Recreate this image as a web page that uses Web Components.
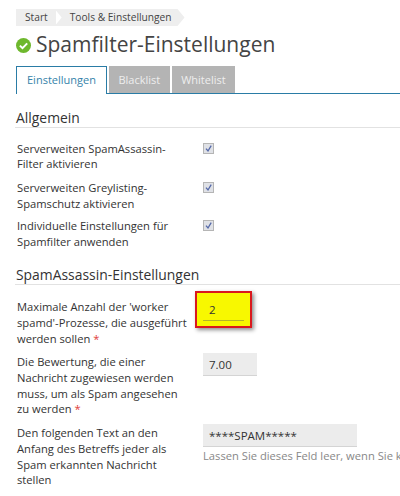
<!DOCTYPE html>
<html lang="de">
<head>
<meta charset="utf-8">
<title>Spamfilter-Einstellungen</title>
<style>
  html, body { margin: 0; height: 496px; overflow: hidden; background: #fff; }
  body { font-family: "Open Sans", "Liberation Sans", sans-serif; color: #333; }
</style>
</head>
<body>
<settings-page>
  <bread-crumbs>
    <span>Start</span>
    <span>Tools &amp; Einstellungen</span>
  </bread-crumbs>
  <page-title>Spamfilter-Einstellungen</page-title>
  <tab-bar>
    <span class="active">Einstellungen</span>
    <span>Blacklist</span>
    <span>Whitelist</span>
  </tab-bar>

  <section-title style="--top:14px">Allgemein</section-title>
  <form-row style="--top:11.5px">Serverweiten SpamAssassin-<br>Filter aktivieren<check-box slot="field"></check-box></form-row>
  <form-row style="--top:7px">Serverweiten Greylisting-<br>Spamschutz aktivieren<check-box slot="field"></check-box></form-row>
  <form-row style="--top:6px">Individuelle Einstellungen für<br>Spamfilter anwenden<check-box slot="field"></check-box></form-row>

  <section-title style="--top:15px">SpamAssassin-Einstellungen</section-title>
  <form-row style="--top:13.5px" required>Maximale Anzahl der 'worker<br>spamd'-Prozesse, die ausgeführt<br>werden sollen<text-field slot="field" value="2" size="41" highlight></text-field></form-row>
  <form-row style="--top:7px" required>Die Bewertung, die einer<br>Nachricht zugewiesen werden<br>muss, um als Spam angesehen<br>zu werden<text-field slot="field" value="7.00" size="54"></text-field></form-row>
  <form-row style="--top:7px">Den folgenden Text an den<br>Anfang des Betreffs jeder als<br>Spam erkannten Nachricht<br>stellen<text-field slot="field" value="****SPAM*****" size="154" hint="Lassen Sie dieses Feld leer, wenn Sie keinen Text hinzufügen möchten."></text-field></form-row>
</settings-page>

<script>
class SettingsPage extends HTMLElement {
  constructor() {
    super();
    this.attachShadow({ mode: "open" });
    this.shadowRoot.innerHTML = `
      <style>
        :host { display:block; width:400px; overflow:hidden; padding:9px 0 0 16px; box-sizing:border-box; }
      </style>
      <slot></slot>`;
  }
}

class BreadCrumbs extends HTMLElement {
  constructor() {
    super();
    this.attachShadow({ mode: "open" });
    this.shadowRoot.innerHTML = `
      <style>
        :host { display:flex; height:17px; font-size:10.2px; line-height:17px; color:#444; }
        ::slotted(span) { background:#eee; padding:0 10px 0 9px; }
        ::slotted(span:first-child) { padding-right:8px; margin-right:-1px; }
        ::slotted(span:last-child) { padding:0 13px 0 15px; clip-path:polygon(0 0, calc(100% - 7px) 0, 100% 50%, calc(100% - 7px) 100%, 0 100%, 7px 50%); }
      </style>
      <slot></slot>`;
  }
}

class PageTitle extends HTMLElement {
  constructor() {
    super();
    this.attachShadow({ mode: "open" });
    this.shadowRoot.innerHTML = `
      <style>
        :host { display:flex; align-items:center; gap:5px; height:34px; margin-top:1px; font-size:21px; color:#444; white-space:nowrap; }
        svg { width:15px; height:15px; flex:none; margin-top:2px; }
      </style>
      <svg viewBox="0 0 15 15"><circle cx="7.5" cy="7.5" r="7.5" fill="#6eb82d"/><path d="M3.9 7.6l2.6 2.6 4.7-4.8" fill="none" stroke="#fff" stroke-width="2"/></svg>
      <slot></slot>`;
  }
}

class TabBar extends HTMLElement {
  constructor() {
    super();
    this.attachShadow({ mode: "open" });
    this.shadowRoot.innerHTML = `
      <style>
        :host { display:flex; gap:2px; height:28px; margin-top:5px; border-bottom:1px solid #2a7ca6; width:384px; box-sizing:border-box; font-size:11px; line-height:27px; }
        ::slotted(span) { background:#b4b4b4; color:#eee; padding:0 9.5px; height:27px; }
        ::slotted(span.active) { background:#fff; color:#3583aa; padding:0 10px; border:1px solid #2a7ca6; border-bottom:0; height:27px; box-sizing:content-box; line-height:26px; }
      </style>
      <slot></slot>`;
  }
}

class SectionTitle extends HTMLElement {
  constructor() {
    super();
    this.attachShadow({ mode: "open" });
    this.shadowRoot.innerHTML = `
      <style>
        :host { display:block; margin-top:var(--top, 14px); height:19px; line-height:19px; font-size:13.9px; color:#333; border-bottom:1px solid #e2e2e2; width:384px; padding-left:1px; margin-left:-1px; }
      </style>
      <slot></slot>`;
  }
}

class FormRow extends HTMLElement {
  constructor() {
    super();
    this.attachShadow({ mode: "open" });
    this.shadowRoot.innerHTML = `
      <style>
        :host { display:grid; grid-template-columns:187px 1fr; margin-top:var(--top, 7px); font-size:11.2px; line-height:15.7px; color:#333; }
        .req { color:#e0403a; }
        .label { white-space:nowrap; padding:1px 0 0 1px; }
      </style>
      <div class="label"><slot></slot>${this.hasAttribute("required") ? ' <span class="req">*</span>' : ""}</div>
      <div><slot name="field"></slot></div>`;
  }
}

class CheckBox extends HTMLElement {
  constructor() {
    super();
    this.attachShadow({ mode: "open" });
    this.shadowRoot.innerHTML = `
      <style>
        :host { display:block; width:11px; height:11px; margin-top:3px; }
        svg { display:block; }
      </style>
      <svg width="11" height="11" viewBox="0 0 11 11">
        <rect x=".5" y=".5" width="10" height="10" fill="#dfe1e6" stroke="#b5b5b5"/>
        <path d="M3 5.6l2 2.4 3.2-5.4" fill="none" stroke="#5468a8" stroke-width="1.3"/>
      </svg>`;
  }
}

class TextField extends HTMLElement {
  constructor() {
    super();
    this.attachShadow({ mode: "open" });
    const hint = this.getAttribute("hint");
    this.shadowRoot.innerHTML = `
      <style>
        :host { display:block; position:relative; font-size:11.2px; }
        input { display:block; box-sizing:border-box; width:${this.getAttribute("size")}px; height:23px; border:0; border-bottom:1px solid #d4d4d4; background:#ececec; padding:0 6px; margin:0; font:inherit; font-size:11.5px; color:#333; outline:0; border-radius:0; }
        :host([highlight]) input { background:#f8f800; border-bottom-color:#b4b428; position:relative; }
        /* the red marker drawn over the screenshot */
        .mark { position:absolute; left:-8px; top:-7px; width:57px; height:37px; box-sizing:border-box; border:2px solid #d9181e; background:#f8f800; box-shadow:2px 2px 4px rgba(0,0,0,.45); }
        .hint { color:#888; line-height:18px; white-space:nowrap; }
      </style>
      ${this.hasAttribute("highlight") ? '<div class="mark"></div>' : ""}
      <input value="${this.getAttribute("value")}" readonly>
      ${hint ? `<div class="hint">${hint}</div>` : ""}`;
  }
}

customElements.define("settings-page", SettingsPage);
customElements.define("bread-crumbs", BreadCrumbs);
customElements.define("page-title", PageTitle);
customElements.define("tab-bar", TabBar);
customElements.define("section-title", SectionTitle);
customElements.define("form-row", FormRow);
customElements.define("check-box", CheckBox);
customElements.define("text-field", TextField);
</script>
</body>
</html>
